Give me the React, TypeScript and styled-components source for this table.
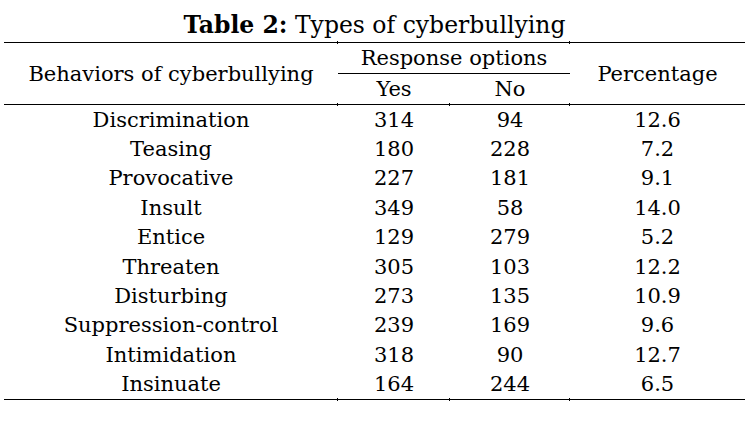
import styled, { createGlobalStyle } from "styled-components";

const GlobalStyle = createGlobalStyle`
    html, body {
        margin: 0;
        padding: 0;
        background: #ffffff;
    }
    body {
        font-family: "DejaVu Serif", "Liberation Serif", serif;
        color: #000;
    }
`;

const Page = styled.div`
    width: 750px;
    height: 424px;
    padding: 0 5px 0 4px;
    box-sizing: border-box;
`;

const Caption = styled.div`
    height: 42px;
    display: flex;
    align-items: flex-end;
    justify-content: center;
    font-size: 23.5px;
    line-height: 30px;
    padding-bottom: 2px;
    box-sizing: border-box;
`;

const Bold = styled.b`
    font-weight: bold;
`;

const Table = styled.table`
    width: 741px;
    border-collapse: collapse;
    table-layout: fixed;
    font-size: 21px;
    border-top: 1px solid #000;
    border-bottom: 1px solid #000;
`;

const Head = styled.th<{ $line?: boolean }>`
    position: relative;
    font-weight: normal;
    text-align: center;
    padding: 0;
    height: 30px;
    line-height: 24px;
    border-bottom: ${(p) => (p.$line ? "1px solid #000" : "none")};
`;

const HeadRow = styled.tr`
    border-bottom: 1px solid #000;
`;

const Cell = styled.td`
    position: relative;
    text-align: center;
    padding: 0;
    height: 29.4px;
    line-height: 22px;
`;

// tiny cell-border marks where the rules cross column edges
const Tick = styled.span<{ $bottom?: boolean }>`
    position: absolute;
    left: -1px;
    width: 1px;
    height: 3px;
    background: #000;
    ${(p) => (p.$bottom ? "bottom: -2px;" : "top: -2px;")}
`;

const rows: [string, number, number, string][] = [
    ["Discrimination", 314, 94, "12.6"],
    ["Teasing", 180, 228, "7.2"],
    ["Provocative", 227, 181, "9.1"],
    ["Insult", 349, 58, "14.0"],
    ["Entice", 129, 279, "5.2"],
    ["Threaten", 305, 103, "12.2"],
    ["Disturbing", 273, 135, "10.9"],
    ["Suppression-control", 239, 169, "9.6"],
    ["Intimidation", 318, 90, "12.7"],
    ["Insinuate", 164, 244, "6.5"],
];

export default function App() {
    return (
        <Page>
            <GlobalStyle />
            <Caption>
                <span>
                    <Bold>Table 2:</Bold> Types of cyberbullying
                </span>
            </Caption>
            <Table>
                <colgroup>
                    <col style={{ width: 334 }} />
                    <col style={{ width: 112 }} />
                    <col style={{ width: 120 }} />
                    <col style={{ width: 175 }} />
                </colgroup>
                <thead>
                    <tr>
                        <Head rowSpan={2}>Behaviors of cyberbullying</Head>
                        <Head colSpan={2} $line>
                            <Tick />
                            Response options
                        </Head>
                        <Head rowSpan={2}>
                            <Tick />
                            Percentage
                        </Head>
                    </tr>
                    <HeadRow>
                        <Head>Yes</Head>
                        <Head>No</Head>
                    </HeadRow>
                </thead>
                <tbody>
                    {rows.map((r, i) => (
                        <tr key={r[0]}>
                            <Cell>{r[0]}</Cell>
                            {[r[1], r[2], r[3]].map((v, j) => (
                                <Cell key={j}>
                                    {i === 0 && <Tick />}
                                    {i === rows.length - 1 && <Tick $bottom />}
                                    {v}
                                </Cell>
                            ))}
                        </tr>
                    ))}
                </tbody>
            </Table>
        </Page>
    );
}
